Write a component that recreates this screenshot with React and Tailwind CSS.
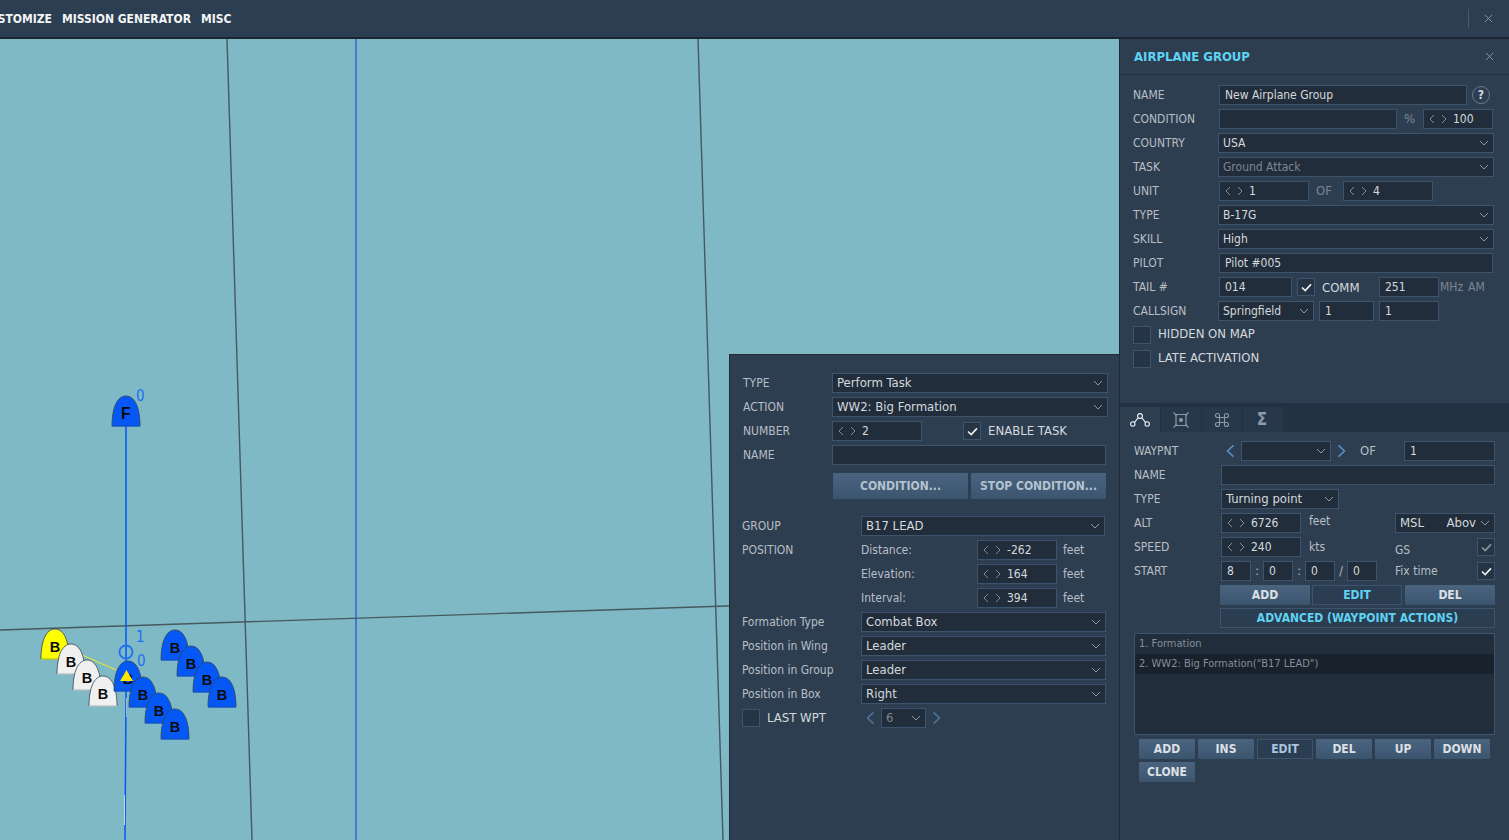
import React from "react";

const FIELD = "h-5 flex-none flex items-center border border-[#3c546d] bg-[#212d3b] leading-none";

function Chevron({ dir = "down", big, className = "" }) {
  const paths = {
    down: "M1 1 L5 5 L9 1",
    left: "M5 1 L1 5 L5 9",
    right: "M1 1 L5 5 L1 9",
  };
  const size = big ? "w-[9px] h-[14px]" : dir === "down" ? "w-[10px] h-[6px]" : "w-[6px] h-[10px]";
  const vb = dir === "down" ? "0 0 10 6" : "0 0 6 10";
  return (
    <svg viewBox={vb} preserveAspectRatio="none" className={`${size} flex-none ${className}`} fill="none" stroke="currentColor" strokeWidth={big ? 1.1 : 1}>
      <path d={paths[dir]} />
    </svg>
  );
}

function Input({ w, value = "" }) {
  return <div className={`${FIELD} ${w} px-[5px] text-[12px] text-[#d5d9dd]`}>{value}</div>;
}

function Select({ w, value = "", muted, large, children }) {
  const size = large ? "text-[13px]" : "text-[12px]";
  const lift = large ? "mb-[2px]" : "";
  return (
    <div className={`${FIELD} ${w} pl-[4px] pr-[4px] justify-between overflow-hidden ${size} ${muted ? "text-[#7c8792]" : "text-[#d5d9dd]"}`}>
      {children || <span className={`whitespace-pre ${lift}`}>{value}</span>}
      <Chevron className="text-[#8d99a5] ml-1" />
    </div>
  );
}

function Spinner({ w, value }) {
  return (
    <div className={`${FIELD} ${w} pl-[5px] text-[12px] text-[#d5d9dd]`}>
      <Chevron dir="left" className="text-[#7f8b97]" />
      <Chevron dir="right" className="text-[#7f8b97] ml-[6px]" />
      <span className="ml-[6px]">{value}</span>
    </div>
  );
}

function Check({ on, dim }) {
  return (
    <div className="w-[18px] h-[18px] flex-none flex items-center justify-center border border-[#3c546d] bg-[#263545]">
      {on && (
        <svg viewBox="0 0 12 10" className={`w-[11px] h-[9px] ${dim ? "text-[#8a97a3]" : "text-[#eef1f3]"}`} fill="none" stroke="currentColor" strokeWidth="1.8">
          <path d="M1 5 L4.5 8.5 L11 1.5" />
        </svg>
      )}
    </div>
  );
}

function Label({ w = "", children, className = "", size = "text-[12px]", tone = "text-[#b9bfc5]" }) {
  return <div className={`flex-none ${size} ${tone} leading-none whitespace-pre ${w} ${className}`}>{children}</div>;
}

function CheckLabel({ children, className = "", w = "" }) {
  return <Label w={w} size="text-[13px]" tone="text-[#d5d9dd]" className={`ml-[7px] ${className}`}>{children}</Label>;
}

function Row({ children, className = "" }) {
  return <div className={`h-6 flex items-center ${className}`}>{children}</div>;
}

function Btn({ w, h = "h-5", children, outline, tone = "text-[#dce0e4]" }) {
  const base = outline
    ? "border border-[#3c546d] bg-[#2b3d50]"
    : "bg-gradient-to-b from-[#4a6480] to-[#3c556f] rounded-[1px]";
  return (
    <div className={`${w} ${h} flex-none flex items-center justify-center text-[12px] font-bold leading-none ${base} ${tone}`}>{children}</div>
  );
}

function X({ className = "" }) {
  return (
    <svg viewBox="0 0 10 10" className={`w-[9px] h-[9px] flex-none text-[#8b9aa8] ${className}`} fill="none" stroke="currentColor" strokeWidth="1">
      <path d="M1 1 L9 9 M9 1 L1 9" />
    </svg>
  );
}

function TopBar() {
  return (
    <div className="h-[39px] flex-none flex items-center bg-[#2c3e51] border-b-2 border-[#1c2530] overflow-hidden">
      <div className="flex-none w-[1468px] flex items-center gap-[10px] text-[12px] font-bold text-[#f2f4f5] -ml-[19px]">
        <span>CUSTOMIZE</span>
        <span>MISSION GENERATOR</span>
        <span>MISC</span>
      </div>
      <div className="h-[19px] w-px bg-[#465b70] ml-[19px]" />
      <X className="ml-[15px]" />
    </div>
  );
}

function Dome({ x, y, fill, letter = "B", size = 14.5 }) {
  return (
    <g transform={`translate(${x} ${y})`}>
      <path d="M0 30 C0 12 5 0 14 0 C23 0 28 12 28 30 Z" fill={fill} stroke="#33434e" strokeWidth="0.8" />
      <path d="M0 30 L28 30" stroke={fill} strokeWidth="1" />
      <text x="14" y="23" textAnchor="middle" fontSize={size} fontWeight="700" fill="#0a0a0a" fontFamily="'Liberation Sans', sans-serif">{letter}</text>
    </g>
  );
}

function MapCanvas() {
  const blue = "#0558f5";
  return (
    <svg className="absolute inset-0 w-[1120px] h-[801px]" viewBox="0 39 1120 801">
      <g stroke="#46595f" strokeWidth="1.4" fill="none">
        <path d="M227 39 L252 840" />
        <path d="M698 39 L723 840" />
        <path d="M0 630 L1120 593" />
      </g>
      <path d="M356 39 L356 840" stroke="#1a44dc" strokeWidth="1.1" />
      <path d="M126 426 L126 700 L125 840" stroke={blue} strokeWidth="1.5" fill="none" />
      <path d="M124.5 795 L124.5 825" stroke="#c8dcef" strokeWidth="1" />
      <path d="M126.5 698 L126.5 717" stroke="#9ab8d4" strokeWidth="1" />
      <path d="M82 655 L116 670" stroke="#f4ee1e" strokeWidth="1" />
      <g fontFamily="'DejaVu Sans', sans-serif" fontSize="15" fill="#1f6ff0">
        <text x="136" y="401">0</text>
        <text x="136" y="642">1</text>
        <text x="137" y="666">0</text>
      </g>
      <circle cx="126" cy="652" r="6.5" fill="none" stroke="#1f6ff0" strokeWidth="1.8" />
      <Dome x={112} y={396} fill={blue} letter="F" size={16} />
      <Dome x={41} y={629} fill="#ffff00" />
      <Dome x={57} y={644} fill="#f0f0f0" />
      <Dome x={73} y={660} fill="#f0f0f0" />
      <Dome x={89} y={676} fill="#f0f0f0" />
      <Dome x={114} y={661} fill={blue} />
      <path d="M126.5 670 L133 681 L120 681 Z" fill="#ffe600" />
      <Dome x={129} y={677} fill={blue} />
      <Dome x={145} y={693} fill={blue} />
      <Dome x={161} y={709} fill={blue} />
      <Dome x={161} y={630} fill={blue} />
      <Dome x={177} y={646} fill={blue} />
      <Dome x={193} y={662} fill={blue} />
      <Dome x={208} y={677} fill={blue} />
    </svg>
  );
}

function TaskPanel() {
  return (
    <div className="absolute left-[729px] top-[315px] bottom-0 w-[391px] bg-[#2d3e51] border-l border-t border-[#1f2a36] pl-[13px] pt-[16px]">
      <Row><Label w="w-[89px]">TYPE</Label><Select w="w-[276px]" large value="Perform Task" /></Row>
      <Row><Label w="w-[89px]">ACTION</Label><Select w="w-[276px]" large value="WW2: Big Formation" /></Row>
      <Row>
        <Label w="w-[89px]">NUMBER</Label>
        <Spinner w="w-[90px]" value="2" />
        <div className="ml-[41px]"><Check on /></div>
        <CheckLabel className="mb-[2px]">ENABLE TASK</CheckLabel>
      </Row>
      <Row><Label w="w-[89px]">NAME</Label><Input w="w-[274px]" /></Row>
      <div className="flex ml-[90px] mt-[6px] gap-[3px]">
        <Btn w="w-[135px]" h="h-[26px]" tone="text-[#b4c2d0]">CONDITION...</Btn>
        <Btn w="w-[135px]" h="h-[26px]" tone="text-[#b4c2d0]">STOP CONDITION...</Btn>
      </div>
      <div className="-ml-px">
        <Row className="mt-[15px]"><Label w="w-[119px]">GROUP</Label><Select w="w-[244px]" large value="B17 LEAD" /></Row>
        <Row>
          <Label w="w-[119px]">POSITION</Label>
          <Label w="w-[116px]">Distance:</Label>
          <Spinner w="w-[80px]" value="-262" />
          <Label className="ml-[6px]">feet</Label>
        </Row>
        <Row>
          <Label w="w-[119px]" />
          <Label w="w-[116px]">Elevation:</Label>
          <Spinner w="w-[80px]" value="164" />
          <Label className="ml-[6px]">feet</Label>
        </Row>
        <Row>
          <Label w="w-[119px]" />
          <Label w="w-[116px]">Interval:</Label>
          <Spinner w="w-[80px]" value="394" />
          <Label className="ml-[6px]">feet</Label>
        </Row>
        <Row><Label w="w-[119px]">Formation Type</Label><Select w="w-[245px]" large value="Combat Box" /></Row>
        <Row><Label w="w-[119px]">Position in Wing</Label><Select w="w-[245px]" large value="Leader" /></Row>
        <Row><Label w="w-[119px]">Position in Group</Label><Select w="w-[245px]" large value="Leader" /></Row>
        <Row><Label w="w-[119px]">Position in Box</Label><Select w="w-[245px]" large value="Right" /></Row>
        <Row>
          <Check />
          <CheckLabel w="w-[99px]" className="mb-[2px]">LAST WPT</CheckLabel>
          <Chevron dir="left" big className="text-[#4f7199]" />
          <div className="ml-[6px]"><Select w="w-[45px]" large value="6" muted /></div>
          <Chevron dir="right" big className="ml-[6px] text-[#4f7199]" />
        </Row>
      </div>
    </div>
  );
}

function GroupForm() {
  const muted = "text-[#7c8792]";
  return (
    <div className="h-[364px] flex-none flex flex-col">
      <div className="h-[36px] flex-none flex items-center justify-between pl-[14px] pr-[15px] border-b border-[#243240]">
        <span className="text-[13px] font-bold text-[#5fd3f3]">AIRPLANE GROUP</span>
        <X />
      </div>
      <div className="pl-[13px] pt-[8px]">
        <Row>
          <Label w="w-[86px]">NAME</Label>
          <Input w="w-[248px]" value="New Airplane Group" />
          <div className="ml-[5px] w-[18px] h-[18px] rounded-full border border-[#607b96] flex items-center justify-center text-[12px] font-bold text-[#d5d9dd]">?</div>
        </Row>
        <Row>
          <Label w="w-[86px]">CONDITION</Label>
          <Input w="w-[178px]" />
          <Label w="w-[26px]" size="text-[13px]" tone={muted} className="pl-[7px] mb-[2px]">%</Label>
          <Spinner w="w-[70px]" value="100" />
        </Row>
        <Row><Label w="w-[85px]">COUNTRY</Label><Select w="w-[276px]" value="USA" /></Row>
        <Row><Label w="w-[85px]">TASK</Label><Select w="w-[276px]" value="Ground Attack" muted /></Row>
        <Row>
          <Label w="w-[86px]">UNIT</Label>
          <Spinner w="w-[90px]" value="1" />
          <Label w="w-[34px]" size="text-[13px]" tone={muted} className="pl-[7px] mb-[2px]">OF</Label>
          <Spinner w="w-[90px]" value="4" />
        </Row>
        <Row><Label w="w-[85px]">TYPE</Label><Select w="w-[276px]" value="B-17G" /></Row>
        <Row><Label w="w-[85px]">SKILL</Label><Select w="w-[276px]" value="High" /></Row>
        <Row><Label w="w-[86px]">PILOT</Label><Input w="w-[274px]" value="Pilot #005" /></Row>
        <Row>
          <Label w="w-[86px]">TAIL #</Label>
          <Input w="w-[73px]" value="014" />
          <div className="ml-[5px]"><Check on /></div>
          <CheckLabel w="w-[57px]">COMM</CheckLabel>
          <Input w="w-[60px]" value="251" />
          <Label tone={muted} className="ml-px w-[28px]">MHz</Label>
          <Label tone={muted}>AM</Label>
        </Row>
        <Row>
          <Label w="w-[85px]">CALLSIGN</Label>
          <Select w="w-[96px]" value="Springfield" />
          <div className="ml-[5px]"><Input w="w-[55px]" value="1" /></div>
          <div className="ml-[5px]"><Input w="w-[60px]" value="1" /></div>
        </Row>
        <Row>
          <Check />
          <CheckLabel className="mb-[4px]">HIDDEN ON MAP</CheckLabel>
        </Row>
        <Row>
          <Check />
          <CheckLabel className="mb-[4px]">LATE ACTIVATION</CheckLabel>
        </Row>
      </div>
    </div>
  );
}

function Tabs() {
  const tab = "h-[25px] flex items-center justify-center border-r border-[#223040]";
  return (
    <div className="h-[29px] flex-none flex items-end bg-[#233243]">
      <div className={`w-[41px] bg-[#2d3e51] ${tab}`}>
        <svg viewBox="0 0 20 14" className="w-[20px] h-[14px] text-[#eef1f3]" fill="none" stroke="currentColor" strokeWidth="1.1">
          <circle cx="2.8" cy="11" r="2.2" /><circle cx="10" cy="3" r="2.4" /><circle cx="17.2" cy="11" r="2.2" />
          <path d="M4.4 9.3 L8.4 4.7 M11.6 4.7 L15.6 9.3" />
        </svg>
      </div>
      <div className={`w-[41px] bg-[#27384a] ${tab}`}>
        <svg viewBox="0 0 16 16" className="w-[16px] h-[16px] text-[#8e9aa6]" fill="none" stroke="currentColor" strokeWidth="1.2">
          <path d="M3 2.5 L13 2.5 M3 13.5 L13 13.5 M3 2.5 L3 13.5 M13 2.5 L13 13.5" />
          <path d="M0.5 0.5 L3.5 3.5 M15.5 0.5 L12.5 3.5 M0.5 15.5 L3.5 12.5 M15.5 15.5 L12.5 12.5" />
          <circle cx="8" cy="8" r="1.4" fill="currentColor" />
        </svg>
      </div>
      <div className={`w-[41px] bg-[#27384a] ${tab}`}>
        <svg viewBox="0 0 16 16" className="w-[16px] h-[16px] text-[#8e9aa6]" fill="none" stroke="currentColor" strokeWidth="1.1">
          <path d="M5.5 5.5 H3.5 a2 2 0 1 1 2 -2 V12.5 a2 2 0 1 1 -2 -2 H12.5 a2 2 0 1 1 -2 2 V3.5 a2 2 0 1 1 2 2 H5.5" />
        </svg>
      </div>
      <div className="w-[40px] h-[25px] flex items-center justify-center pr-[2px] bg-[#27384a] text-[#8e9aa6] text-[17px] font-bold leading-none">Σ</div>
    </div>
  );
}

function WaypointForm() {
  return (
    <div className="flex-1 bg-[#2d3e51] pl-[14px] pt-[7px]">
      <Row>
        <Label w="w-[92px]">WAYPNT</Label>
        <Chevron dir="left" big className="text-[#5b8cc4]" />
        <div className="ml-[6px]"><Select w="w-[90px]" /></div>
        <Chevron dir="right" big className="ml-[6px] text-[#5b8cc4]" />
        <Label w="w-[58px]" size="text-[13px]" className="pl-[14px] mb-[2px]">OF</Label>
        <Input w="w-[91px]" value="1" />
      </Row>
      <Row><Label w="w-[87px]">NAME</Label><Input w="w-[274px]" /></Row>
      <Row><Label w="w-[87px]">TYPE</Label><Select w="w-[118px]" large value="Turning point" /></Row>
      <Row>
        <Label w="w-[87px]">ALT</Label>
        <Spinner w="w-[80px]" value="6726" />
        <Label w="w-[94px]" className="pl-2 -mt-[4px]">feet</Label>
        <Select w="w-[100px]" large>
          <span className="flex-1 flex justify-between mb-[2px]"><span>MSL</span><span>Abov</span></span>
        </Select>
      </Row>
      <Row>
        <Label w="w-[87px]">SPEED</Label>
        <Spinner w="w-[80px]" value="240" />
        <Label w="w-[94px]" className="pl-2">kts</Label>
        <Label w="w-[82px]" className="mt-[6px]">GS</Label>
        <Check on dim />
      </Row>
      <Row>
        <Label w="w-[87px]">START</Label>
        <Input w="w-[30px]" value="8" />
        <Label w="w-[12px]" className="text-center">:</Label>
        <Input w="w-[30px]" value="0" />
        <Label w="w-[12px]" className="text-center">:</Label>
        <Input w="w-[30px]" value="0" />
        <Label w="w-[12px]" className="text-center">/</Label>
        <Input w="w-[30px]" value="0" />
        <Label w="w-[100px]" className="pl-[18px]">Fix time</Label>
        <Check on />
      </Row>
      <div className="flex ml-[86px] mt-[2px] gap-[2px]">
        <Btn w="w-[90px]">ADD</Btn>
        <Btn w="w-[90px]" outline tone="text-[#5fd3f3]">EDIT</Btn>
        <div className="ml-px"><Btn w="w-[90px]">DEL</Btn></div>
      </div>
      <div className="ml-[86px] mt-[3px]"><Btn w="w-[275px]" outline tone="text-[#5fd3f3]">ADVANCED (WAYPOINT ACTIONS)</Btn></div>
      <div className="mt-[5px] w-[361px] h-[102px] border border-[#3c546d] bg-[#212d3b] text-[11px] text-[#848f9a]">
        <div className="h-[20px] flex items-center pl-[4px]">1. Formation</div>
        <div className="h-[20px] flex items-center pl-[4px] bg-[#18212c]">2. WW2: Big Formation("B17 LEAD")</div>
      </div>
      <div className="mt-[4px] ml-[5px] w-[352px] flex flex-wrap gap-[3px]">
        <Btn w="w-[56px]">ADD</Btn>
        <Btn w="w-[56px]">INS</Btn>
        <Btn w="w-[56px]" outline tone="text-[#a9c4e0]">EDIT</Btn>
        <Btn w="w-[56px]">DEL</Btn>
        <Btn w="w-[56px]">UP</Btn>
        <Btn w="w-[56px]">DOWN</Btn>
        <Btn w="w-[56px]">CLONE</Btn>
      </div>
    </div>
  );
}

export default function App() {
  return (
    <div className="w-[1509px] h-[840px] overflow-hidden flex flex-col font-['DejaVu_Sans',sans-serif] [font-stretch:condensed] bg-[#2d3e51]">
      <TopBar />
      <div className="flex-1 flex min-h-0">
        <div className="relative w-[1119px] flex-none bg-[#7fb9c6] overflow-hidden">
          <MapCanvas />
          <TaskPanel />
        </div>
        <div className="flex-1 flex flex-col border-l border-[#1f2a36] min-w-0">
          <GroupForm />
          <Tabs />
          <WaypointForm />
        </div>
      </div>
    </div>
  );
}
